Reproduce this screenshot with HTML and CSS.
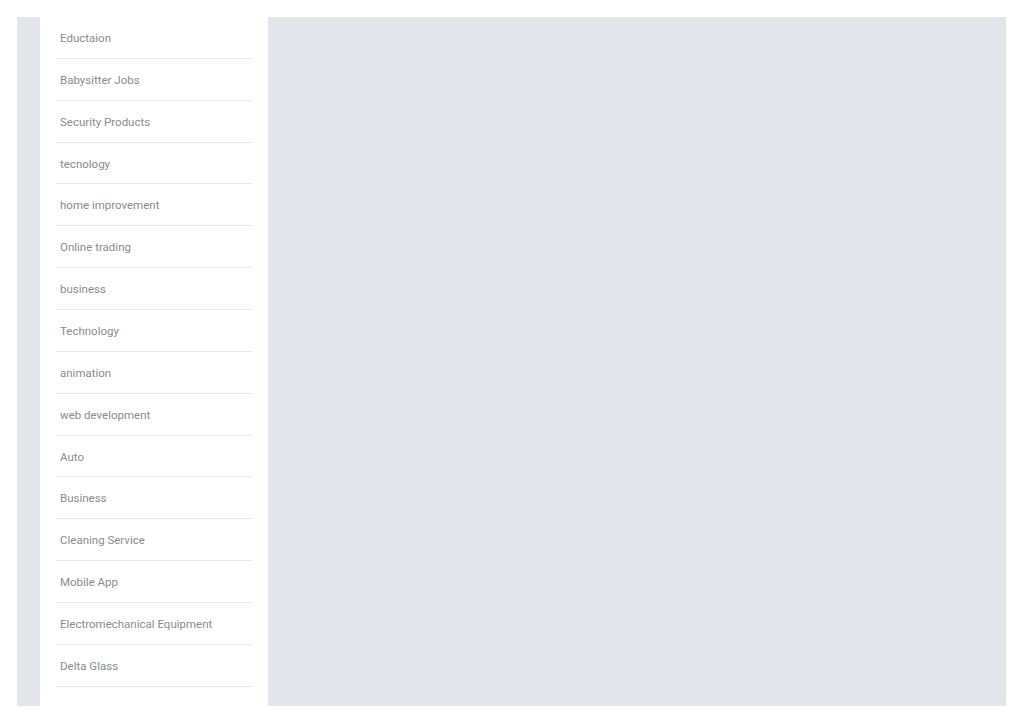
FILE: index.html
```html
<!DOCTYPE html>
<html lang="en">
<head>
    <meta charset="UTF-8">
    <meta name="viewport" content="width=device-width, initial-scale=1.0">
    <title>Categories</title>
    <link rel="stylesheet" href="styles.css">
</head>
<body>
    <div class="layout">
        <aside class="sidebar">
            <ul class="categories">
                <li><a href="#">Eductaion</a></li>
                <li><a href="#">Babysitter Jobs</a></li>
                <li><a href="#">Security Products</a></li>
                <li><a href="#">tecnology</a></li>
                <li><a href="#">home improvement</a></li>
                <li><a href="#">Online trading</a></li>
                <li><a href="#">business</a></li>
                <li><a href="#">Technology</a></li>
                <li><a href="#">animation</a></li>
                <li><a href="#">web development</a></li>
                <li><a href="#">Auto</a></li>
                <li><a href="#">Business</a></li>
                <li><a href="#">Cleaning Service</a></li>
                <li><a href="#">Mobile App</a></li>
                <li><a href="#">Electromechanical Equipment</a></li>
                <li><a href="#">Delta Glass</a></li>
            </ul>
        </aside>
        <main class="content"></main>
    </div>
</body>
</html>
```

FILE: styles.css
```css
body {
    margin: 0;
    padding: 17px 18px 17px 17px;
    background: #fff;
    font-family: Roboto, 'Noto Sans', sans-serif;
}
.layout {
    display: flex;
    height: 689px;
    padding-left: 23px;
    background: #e2e5e9;
}
.sidebar {
    width: 196px;
    padding: 0 16px;
    background: #fff;
}
.categories {
    list-style: none;
    margin: 0;
    padding: 0;
}
.categories li {
    height: 40.87px;
    border-bottom: 1px solid #e8e8e8;
}
.categories a {
    display: block;
    padding: 2px 4px 0;
    line-height: 38px;
    font-size: 11.5px;
    color: #8c8c8c;
    text-decoration: none;
}
.content {
    flex: 1;
}
```
